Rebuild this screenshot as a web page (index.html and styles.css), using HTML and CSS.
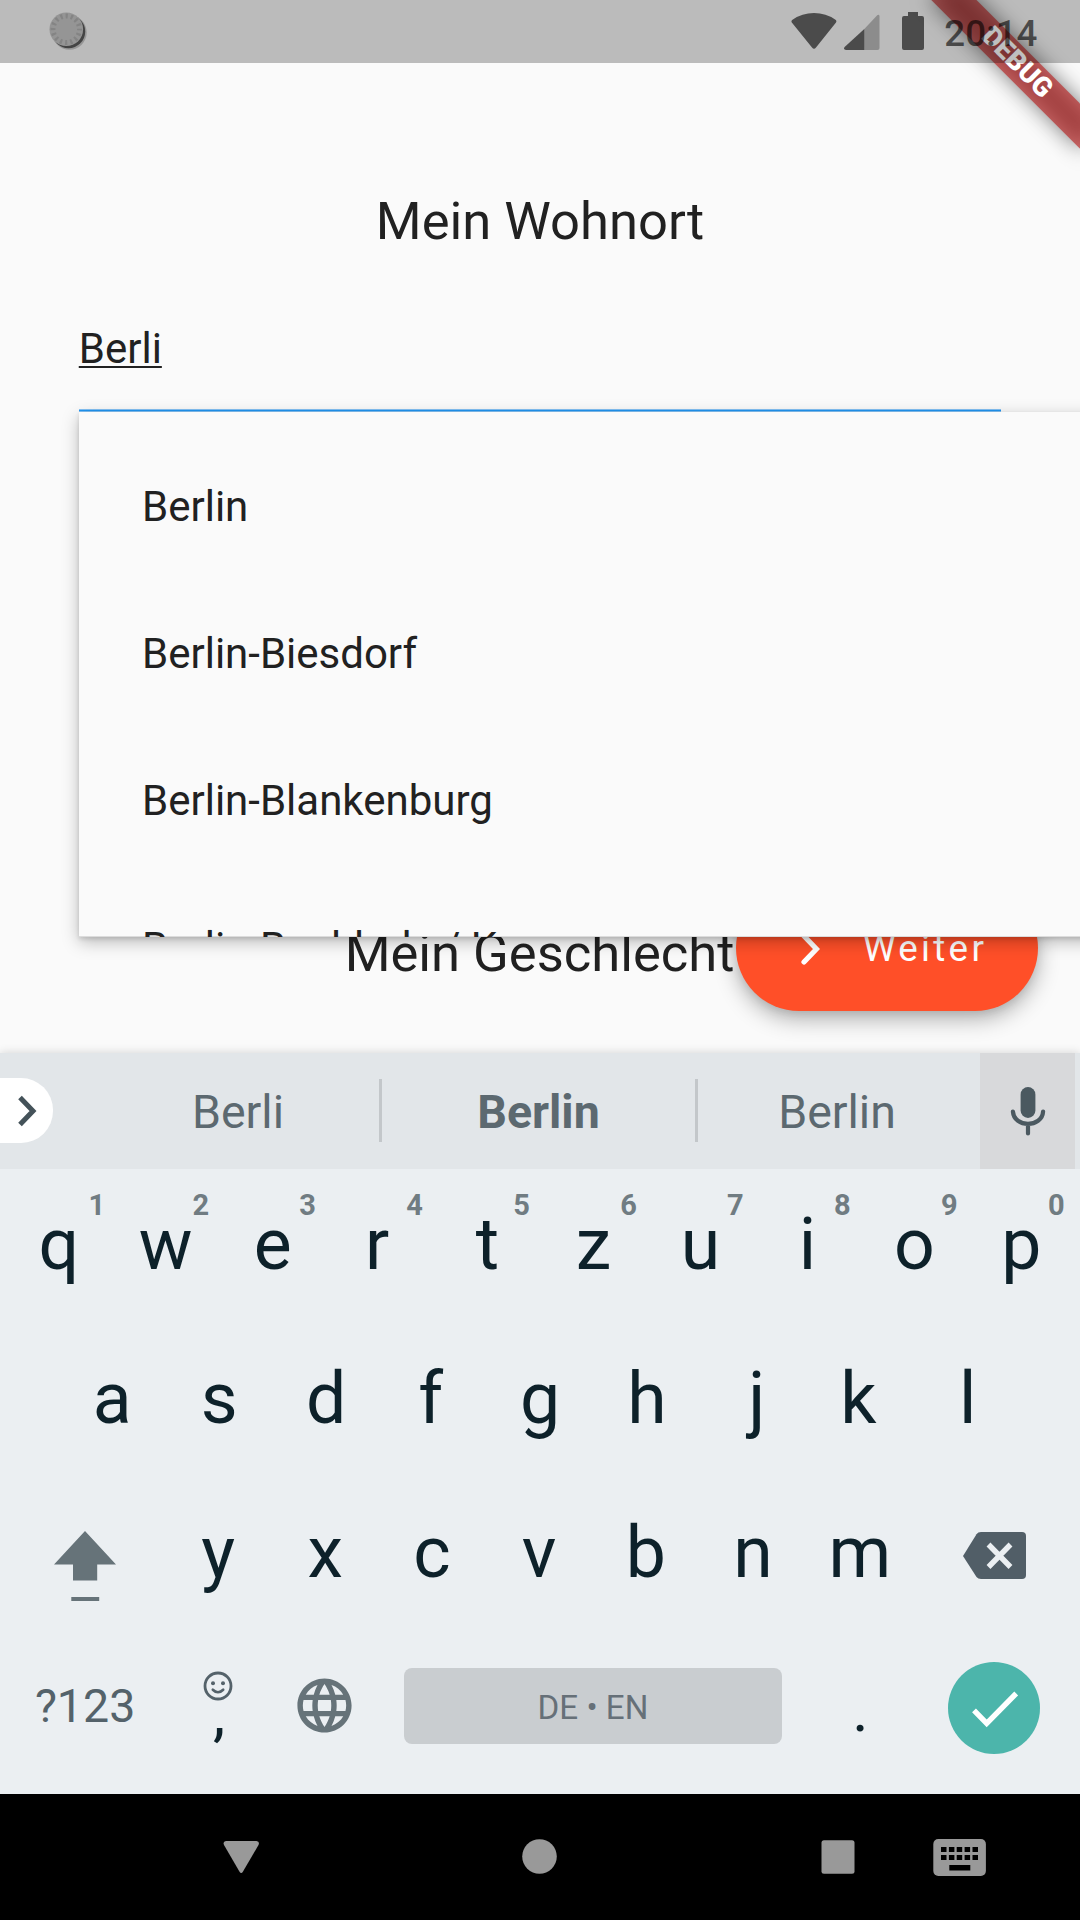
FILE: index.html
```html
<!DOCTYPE html>
<html lang="de">
<head>
<meta charset="utf-8">
<title>Mein Wohnort</title>
<link rel="stylesheet" href="styles.css">
</head>
<body>
<div class="screen">
  <main class="app">
    <h1 class="title">Mein Wohnort</h1>
    <div class="field"><span class="field-text">Berli</span></div>
    <h1 class="title title-gender">Mein Geschlecht</h1>
    <button class="fab">
      <svg class="fab-icon" width="20" height="34" viewBox="0 0 20 34"><path d="M4 4L16.500 17L4 30" fill="none" stroke="#fff" stroke-width="5.200" stroke-linecap="round"/></svg>
      <span>Weiter</span>
    </button>
    <ul class="dropdown">
      <li>Berlin</li>
      <li>Berlin-Biesdorf</li>
      <li>Berlin-Blankenburg</li>
      <li>Berlin-Buchholz / Karow</li>
    </ul>
    <div class="ribbon"><span>DEBUG</span></div>
    <header class="status">
      <svg class="dial" width="40" height="40" viewBox="0 0 40 40">
        <circle cx="22.500" cy="22.500" r="17.200" fill="#7d7d7d" opacity=".6"/>
        <circle cx="21.500" cy="21.500" r="16.700" fill="#444"/>
        <circle cx="19.300" cy="19.300" r="16.800" fill="#959595"/>
        <circle cx="19.300" cy="19.300" r="13.300" fill="none" stroke="#848484" stroke-width="5" stroke-dasharray="2.200 3.023" stroke-dashoffset="1.100"/>
      </svg>
      <div class="status-right">
        <svg class="wifi" width="46" height="38" viewBox="0 0 46 38"><path d="M.8 10.500Q-.2 9 1.500 7.700Q11 1 23 1T44.500 7.700Q46 9 45 10.500L25 35.500Q23 38 21 35.500Z"/></svg>
        <svg class="signal" width="36" height="36" viewBox="0 0 36 36"><path d="M20.300 15V36H2Q-1 35.300.6 33Z"/><path class="dim" d="M20.300 15L33.200 1.200Q35 0 35.500 2V34Q35.500 36 33.500 36H20.300Z"/></svg>
        <svg class="battery" width="22" height="38" viewBox="0 0 22 38"><path d="M6 0H16V4H20Q22 4 22 6V36Q22 38 20 38H2Q0 38 0 36V6Q0 4 2 4H6Z"/></svg>
        <span class="clock">20:14</span>
      </div>
    </header>
  </main>

  <section class="keyboard">
    <div class="suggestions">
      <div class="expand"><svg width="20" height="32" viewBox="0 0 20 32"><path d="M2 2.500L15 16L2 29.500" fill="none" stroke="#445259" stroke-width="5"/></svg></div>
      <span class="word">Berli</span><i class="divider"></i>
      <span class="word word-main">Berlin</span><i class="divider"></i>
      <span class="word word-last">Berlin</span>
      <div class="mic"><svg width="36" height="50" viewBox="0 0 36 50"><rect x="10.600" y="1" width="14.800" height="31" rx="7.400" fill="#4b5960"/><path d="M2.900 25.500C4 42 32 42 33.100 25.500M18 39V47.500" fill="none" stroke="#4b5960" stroke-width="4.200" stroke-linecap="round"/></svg></div>
    </div>
    <div class="row row-top">
      <div class="key">q<sup class="one">1</sup></div><div class="key">w<sup>2</sup></div><div class="key">e<sup>3</sup></div><div class="key"><span class="lean-left">r</span><sup>4</sup></div><div class="key"><span class="lean-right-slight">t</span><sup>5</sup></div><div class="key">z<sup>6</sup></div><div class="key">u<sup>7</sup></div><div class="key">i<sup>8</sup></div><div class="key">o<sup>9</sup></div><div class="key">p<sup>0</sup></div>
    </div>
    <div class="row">
      <div class="key">a</div><div class="key">s</div><div class="key">d</div><div class="key"><span class="lean-left">f</span></div><div class="key">g</div><div class="key">h</div><div class="key"><span class="lean-right">j</span></div><div class="key"><span class="lean-left">k</span></div><div class="key">l</div>
    </div>
    <div class="row row-low">
      <div class="key wide shift"><svg width="62" height="70" viewBox="0 0 62 70"><path d="M31 0L62 33.500H43.200V49.500H19V33.500H0ZM17.300 66H45.200V70H17.300Z" fill="#667379"/></svg></div>
      <div class="key">y</div><div class="key">x</div><div class="key">c</div><div class="key">v</div><div class="key">b</div><div class="key">n</div><div class="key">m</div>
      <div class="key wide backspace"><svg width="63" height="48" viewBox="0 0 63 48"><path d="M0 24L13.500 2.200Q15 0 18 0H59Q63 0 63 4V43Q63 47 59 47H18Q15 47 13.500 45Z" fill="#515e67"/><path d="M25.500 12.500L47.500 35M47.500 12.500L25.500 35" stroke="#ebeff2" stroke-width="5.400"/></svg></div>
    </div>
    <div class="row row-bottom">
      <div class="key wide symbols">?123</div>
      <div class="key comma"><svg width="30" height="30" viewBox="0 0 30 30"><circle cx="15" cy="15" r="13" fill="none" stroke="#54626a" stroke-width="2.800"/><circle cx="10" cy="12.300" r="2" fill="#54626a"/><circle cx="20" cy="12.300" r="2" fill="#54626a"/><path d="M9.800 18.700Q15 23.800 20.200 18.700" fill="none" stroke="#54626a" stroke-width="2.600" stroke-linecap="round"/></svg><span>,</span></div>
      <div class="key"><svg width="65" height="65" viewBox="0 0 24 24"><path fill="#667379" d="M11.990 2C6.470 2 2 6.480 2 12s4.470 10 9.990 10C17.520 22 22 17.520 22 12S17.520 2 11.990 2zm6.930 6h-2.950c-.32-1.250-.78-2.450-1.380-3.560 1.840.63 3.370 1.910 4.330 3.560zM12 4.040c.83 1.200 1.480 2.530 1.910 3.960h-3.820c.43-1.430 1.080-2.760 1.910-3.960zM4.260 14C4.100 13.360 4 12.690 4 12s.1-1.360.26-2h3.380c-.08.66-.14 1.320-.14 2 0 .68.06 1.340.14 2H4.260zm.82 2h2.950c.32 1.250.78 2.450 1.380 3.560-1.840-.63-3.370-1.900-4.330-3.560zm2.950-8H5.080c.96-1.660 2.490-2.930 4.330-3.560C8.810 5.550 8.350 6.750 8.030 8zM12 19.960c-.83-1.200-1.480-2.530-1.910-3.960h3.820c-.43 1.430-1.080 2.760-1.910 3.960zM14.340 14H9.660c-.09-.66-.16-1.320-.16-2 0-.68.07-1.350.16-2h4.680c.09.65.16 1.320.16 2 0 .68-.07 1.340-.16 2zm.25 5.560c.6-1.110 1.060-2.310 1.380-3.560h2.950c-.96 1.650-2.490 2.930-4.330 3.560zM16.360 14c.08-.66.14-1.320.14-2 0-.68-.06-1.340-.14-2h3.380c.16.640.26 1.310.26 2s-.1 1.360-.26 2h-3.380z"/></svg></div>
      <div class="space">DE • EN</div>
      <div class="key period"><span>.</span></div>
      <div class="key wide enter"><svg width="92" height="92" viewBox="0 0 92 92"><circle cx="46" cy="46" r="46" fill="#4cb5ab"/><path d="M26 48.300L38.700 61.300L68.200 31.500" fill="none" stroke="#fff" stroke-width="5.400"/></svg></div>
    </div>
  </section>

  <nav class="nav">
    <svg width="1080" height="126" viewBox="0 0 1080 126" fill="#999">
      <path d="M226 47H256.500Q260 47.500 258.500 51L243 77.500Q241.200 80.500 239.400 77.500L224 51Q222.500 47.500 226 47Z"/>
      <circle cx="539.500" cy="62.500" r="17.300"/>
      <rect x="821.500" y="46.300" width="33" height="33.400" rx="2.500"/>
      <rect x="933.300" y="45" width="52.600" height="37" rx="5"/>
      <path fill="#000" d="M941 53h5.500v5h-5.500zM948.900 53h5.500v5h-5.500zM956.700 53h5.500v5h-5.500zM964.600 53h5.500v5h-5.500zM972.500 53h5.500v5h-5.500zM941 61h5.500v5h-5.500zM948.900 61h5.500v5h-5.500zM956.700 61h5.500v5h-5.500zM964.600 61h5.500v5h-5.500zM972.500 61h5.500v5h-5.500zM949.300 71h21v5.500h-21z"/>
    </svg>
  </nav>
</div>
</body>
</html>
```
FILE: styles.css
```css
* { box-sizing: border-box; }
body { margin: 0; font-family: Roboto, sans-serif; }
svg { display: block; flex: none; }

.screen {
  width: 1080px;
  height: 1920px;
  display: flex;
  flex-direction: column;
  overflow: hidden;
}

/* App surface */
.app {
  position: relative;
  height: 1053px;
  overflow: hidden;
  background: #fafafa;
  color: #212121;
}
.title {
  margin: 0;
  padding-top: 190px;
  font-size: 52.5px;
  font-weight: 400;
  line-height: 62px;
  text-align: center;
}
.title-gender { padding: 510px 1px 0 0; }
.field {
  margin: 0 78.75px;
  height: 160px;
  padding-top: 72px;
  font-size: 42px;
  line-height: 50px;
  background: linear-gradient(#84c2f5 0 1px, #2196f3 1px 2px, #84c2f5 2px 3px) bottom / 100% 3px no-repeat;
}
.field-text {
  text-decoration: underline;
  text-decoration-thickness: 2px;
  text-underline-offset: 3px;
  text-decoration-skip-ink: none;
}
.dropdown {
  position: absolute;
  left: 79px;
  top: 412px;
  width: 1040px;
  height: 525px;
  margin: 0;
  padding: 21px 0 0;
  overflow: hidden;
  list-style: none;
  background: #fafafa;
  font-size: 42px;
  box-shadow: inset 0 -1px #dcdcdc, 0 2px 4px rgba(0,0,0,.12), 0 5px 16px rgba(0,0,0,.26);
}
.dropdown li {
  height: 147px;
  padding-left: 63px;
  line-height: 147px;
  white-space: nowrap;
}
.fab {
  position: absolute;
  left: 736px;
  top: 885px;
  width: 302px;
  height: 126px;
  display: flex;
  align-items: center;
  gap: 43px;
  padding: 0 0 0 64px;
  border: 0;
  border-radius: 63px;
  background: #ff4f28;
  color: #fff;
  font: 400 36.75px Roboto, sans-serif;
  letter-spacing: 3.28px;
  box-shadow: 0 8px 22px rgba(0,0,0,.3), 0 3px 8px rgba(0,0,0,.08);
}
.fab-icon { margin-top: 1px; }

/* Corner banner */
.ribbon {
  position: absolute;
  left: 911.9px;
  top: 47.35px;
  width: 210px;
  height: 31.5px;
  transform: rotate(45deg);
  color: #fff;
  font-size: 27.3px;
  font-weight: 900;
  line-height: 31.5px;
  text-align: center;
}
.ribbon::before, .ribbon::after {
  content: "";
  position: absolute;
  inset: 0;
  background: rgba(0,0,0,.5);
  filter: blur(10.4px);
}
.ribbon::after { background: rgba(183,28,28,.63); filter: none; }
.ribbon span { position: relative; z-index: 1; }

/* Status bar scrim */
.status {
  position: absolute;
  inset: 0 0 auto;
  height: 63px;
  z-index: 2;
  display: flex;
  justify-content: space-between;
  padding: 0 42.5px 0 47px;
  background: rgba(0,0,0,.25);
  color: rgba(0,0,0,.6);
}
.dial { margin-top: 10px; }
.status-right { display: flex; fill: rgba(0,0,0,.6); }
.wifi { margin-top: 12px; }
.signal { margin: 14px 0 0 6.5px; }
.dim { fill: rgba(0,0,0,.25); }
.battery { margin: 12px 0 0 22px; }
.clock {
  margin-left: 20.5px;
  font-size: 36.75px;
  font-weight: 500;
  line-height: 67px;
}

/* Keyboard */
.keyboard {
  position: relative;
  height: 741px;
  background: #ebeff2;
  box-shadow: 0 0 9px rgba(0,0,0,.16);
}
.suggestions {
  height: 116px;
  display: flex;
  align-items: center;
  background: #e2e6e9;
  color: #5c6970;
  font-size: 46.5px;
  padding-bottom: 1px;
}
.expand {
  width: 52.5px;
  height: 65px;
  margin-right: 44.5px;
  display: flex;
  align-items: center;
  padding-left: 18px;
  border-radius: 0 32px 32px 0;
  background: #fff;
}
.word { flex: 0 0 282px; text-align: center; line-height: 116px; padding-top: 3px; }
.word-main { flex-basis: 313px; font-weight: 700; }
.word-last { padding-right: 4px; }
.divider { width: 3px; height: 63px; background: #c3c7ca; }
.mic {
  width: 95px;
  height: 116px;
  margin: 0 5px -1px auto;
  display: flex;
  align-items: center;
  justify-content: center;
  background: #d8d9db;
}
.row {
  height: 154.5px;
  display: flex;
  justify-content: center;
  align-items: center;
  padding-bottom: 5.5px;
}
.row-top { padding-bottom: 3.5px; }
.row-low, .row-bottom { padding-right: 2px; }
.key {
  position: relative;
  width: 106.95px;
  display: flex;
  justify-content: center;
  color: #0d212a;
  font-size: 71.5px;
  line-height: 149px;
}
.lean-left { padding-right: 5px; }
.lean-right { padding-left: 6px; }
.lean-right-slight { padding-left: 2px; }
.key sup {
  position: absolute;
  left: 50%;
  width: 70px;
  top: 0;
  color: #707c82;
  font-size: 29px;
  font-weight: 700;
  line-height: 34px;
  padding-top: 18px;
  text-align: center;
}
.key .one { padding-left: 6px; }
.wide { width: 160px; align-items: center; }
.shift { padding-top: 26px; }
.backspace { padding: 6px 0 0 2px; }
.symbols { color: #54626a; font-size: 46.5px; padding: 2px 0 0 2px; }
.comma { flex-direction: column; align-items: center; height: 149px; }
.comma svg { margin-top: 9px; }
.comma span, .period span { font-size: 62px; line-height: 72px; }
.comma span { margin-top: -23px; padding-left: 3px; }
.row-bottom { padding-bottom: 8px; }
.period { padding-top: 8px; }
.enter { padding-top: 5px; }
.space {
  width: 378px;
  height: 76px;
  margin: 0 25px 0 26px;
  border-radius: 8px;
  background: #c9cdd0;
  color: #667078;
  font-size: 33.2px;
  line-height: 80px;
  text-align: center;
}

/* System navigation */
.nav { height: 126px; background: #000; }
```
